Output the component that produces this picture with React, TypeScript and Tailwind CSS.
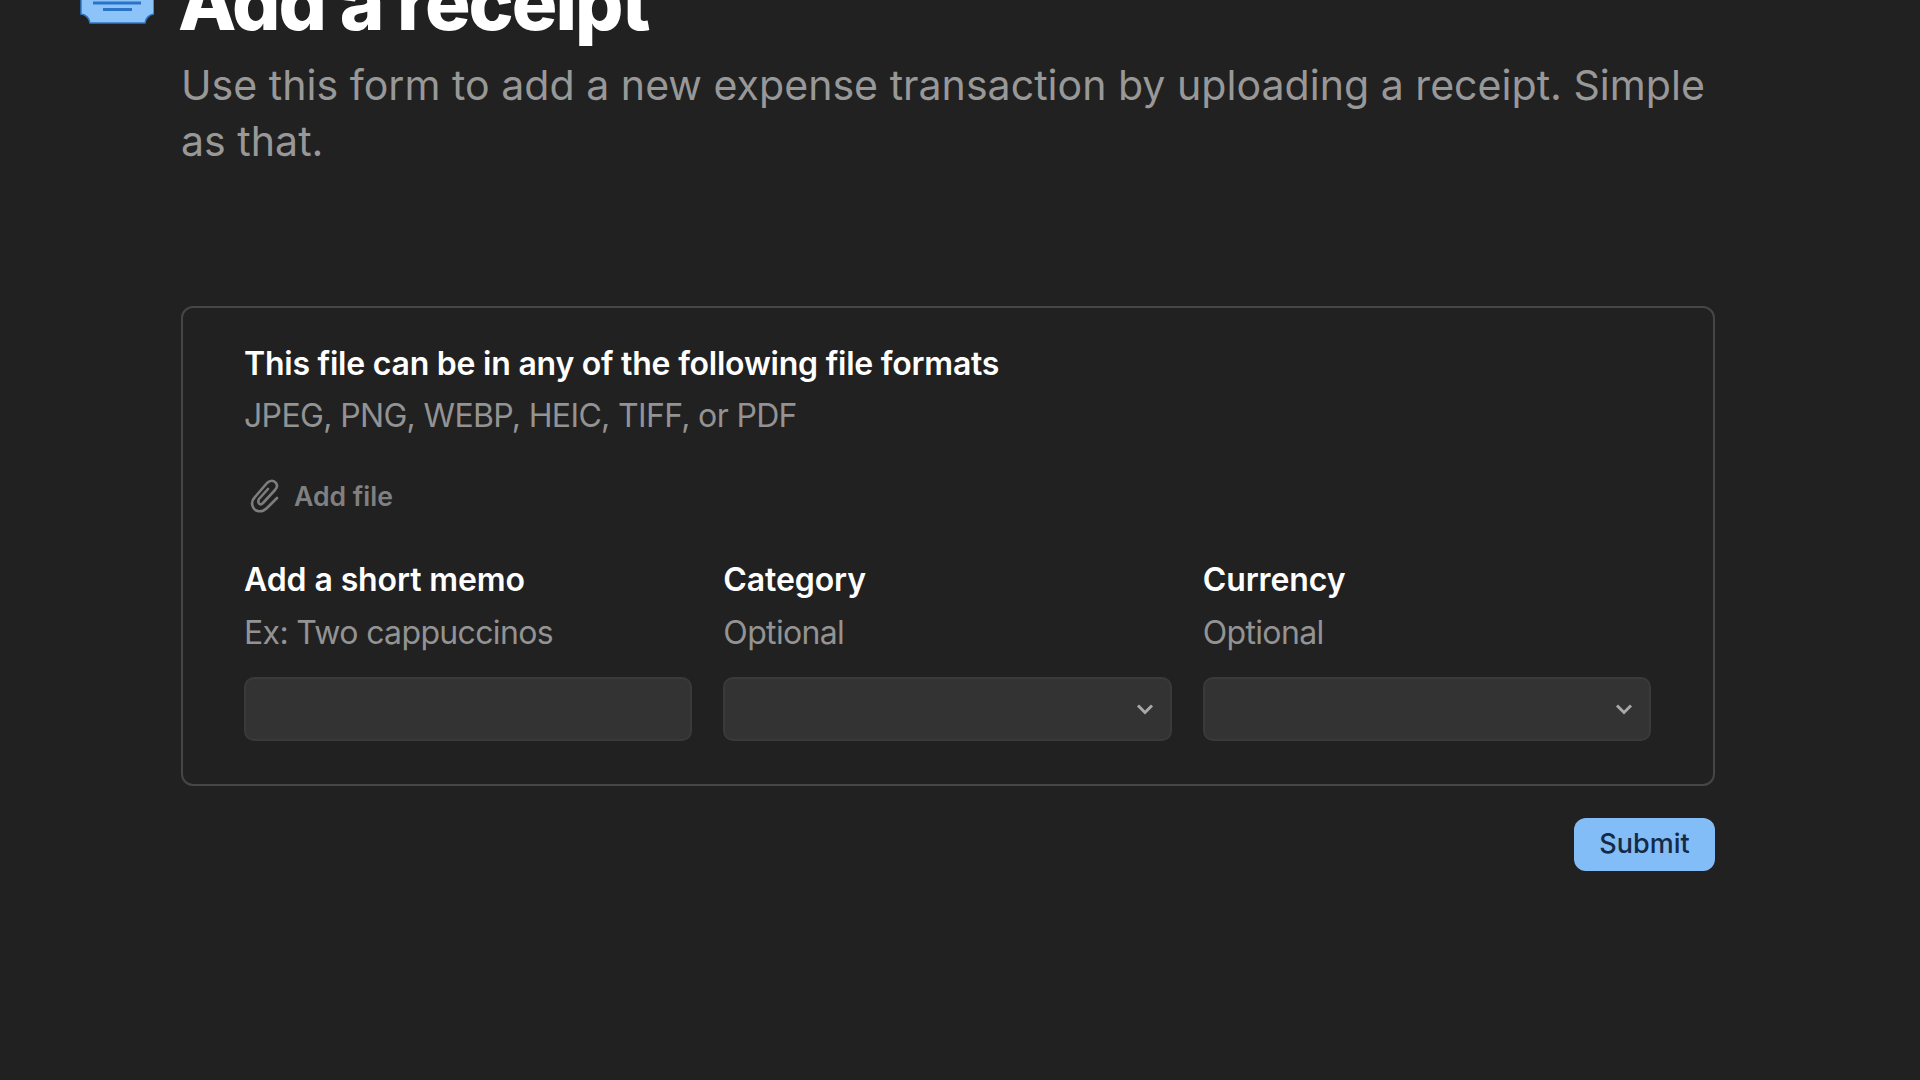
const Field = ({ label, hint, select }: { label: string; hint: string; select?: boolean }) => (
  <div className="flex flex-col">
    <div className="text-[32px] leading-[44px] font-semibold tracking-[-0.1px] text-white">{label}</div>
    <div className="mt-[9px] text-[32px] leading-[44px] tracking-[-0.65px] text-[#939393]">{hint}</div>
    <div className="mt-[22px] flex h-[64px] items-center justify-end rounded-[10px] border-2 border-[#3a3a3a] bg-[#333333] pr-[16px]">
      {select && (
        <svg width="18" height="12" viewBox="0 0 18 12" fill="none">
          <path d="M2 2.5 9 9.5 16 2.5" stroke="#a8a8a8" strokeWidth="3" />
        </svg>
      )}
    </div>
  </div>
);

export default function App() {
  return (
    <div className="h-[1080px] overflow-hidden bg-[#212121] font-['Inter',sans-serif]">
      <div className="flex -mt-[30px] pl-[80px]">
        <svg width="74" height="54" viewBox="0 0 74 54" className="shrink-0">
          <path
            d="M1 0V44a10 10 0 0 1 9 9H65a10 10 0 0 1 9-9V0Z"
            fill="#8cc4fa"
            stroke="#2f78c8"
            strokeWidth="1.5"
          />
          <path d="M13 33H61M23 39.5H52" stroke="#2a73c6" strokeWidth="3" />
        </svg>
        <h1 className="-mt-[8px] ml-[24px] text-[76px] leading-[80px] font-extrabold tracking-[-0.026em] text-white">Add a receipt</h1>
      </div>
      <div className="ml-[181px] w-[1534px]">
        <p className="mt-[15px] text-[41.1px] leading-[56px] text-[#989898]">
          Use this form to add a new expense transaction by uploading a receipt. Simple as that.
        </p>
        <div className="mt-[137px] rounded-[12px] border-2 border-[#464646] pt-[34px] pr-[62px] pb-[43px] pl-[61px]">
          <div className="text-[32px] leading-[44px] font-semibold tracking-[-0.23px] text-white">This file can be in any of the following file formats</div>
          <div className="mt-[8px] text-[32px] leading-[44px] tracking-[-0.65px] text-[#939393]">JPEG, PNG, WEBP, HEIC, TIFF, or PDF</div>
          <div className="mt-[38px] flex items-center gap-[14px] pl-[6px]">
            <svg width="30" height="36" viewBox="0 0 30 36" fill="none" stroke="#7d7d7d" strokeWidth="2.6" strokeLinecap="round" strokeLinejoin="round">
              <path d="M27 20 17 30C12 35 5 34 3 29 1 25 2 22 5 19L17 5C20 2 24 2 26 5 28 8 27 10 25 12L13 25C10 28 7 25 9 21L18 11" />
            </svg>
            <span className="text-[26.6px] leading-[40px] font-semibold text-[#808080]">Add file</span>
          </div>
          <div className="mt-[42px] grid grid-cols-3 gap-[31px]">
            <Field label="Add a short memo" hint="Ex: Two cappuccinos" />
            <Field label="Category" hint="Optional" select />
            <Field label="Currency" hint="Optional" select />
          </div>
        </div>
        <div className="mt-[32px] flex justify-end">
          <button className="h-[53px] w-[141px] rounded-[12px] bg-[#82bdf8] text-[27px] font-medium text-[#142a45]">Submit</button>
        </div>
      </div>
    </div>
  );
}
